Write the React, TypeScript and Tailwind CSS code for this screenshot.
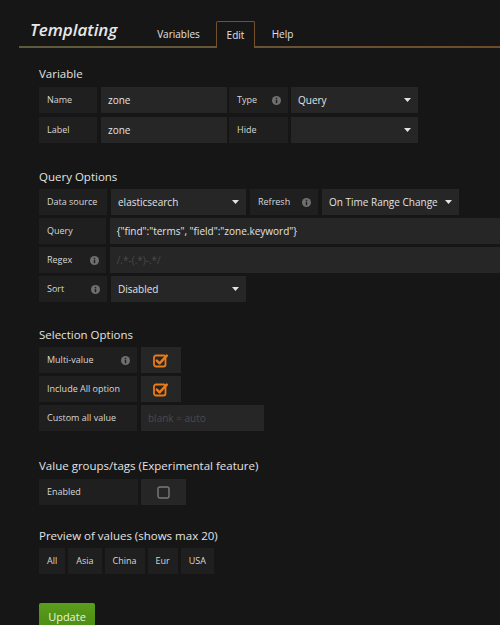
import React from 'react';

const Info = () => (
  <svg width="9" height="9" viewBox="0 0 10 10" className="shrink-0">
    <circle cx="5" cy="5" r="5" fill="#6f6f6f" />
    <rect x="4.2" y="4.2" width="1.6" height="3.8" fill="#1f1f1f" />
    <rect x="4.2" y="2" width="1.6" height="1.5" fill="#1f1f1f" />
  </svg>
);

const Caret = () => (
  <svg width="7" height="4" viewBox="0 0 7 4" className="shrink-0">
    <path d="M0 0 L7 0 L3.5 4 Z" fill="#e3e3e3" />
  </svg>
);

const Checked = () => (
  <svg width="16" height="15" viewBox="0 0 16 15">
    <rect x="1" y="2.5" width="11.5" height="11" rx="2" fill="none" stroke="#eb7b18" strokeWidth="1.8" />
    <path d="M3.8 7.6 L6.6 10.4 L13.8 2.6" fill="none" stroke="#eb7b18" strokeWidth="2.4" strokeLinecap="round" strokeLinejoin="round" />
  </svg>
);

const Unchecked = () => (
  <svg width="13" height="13" viewBox="0 0 13 13">
    <rect x="1" y="1" width="11" height="11" rx="2" fill="none" stroke="#7a7a7a" strokeWidth="1.4" />
  </svg>
);

const Label: React.FC<{ w: string; info?: boolean; children: React.ReactNode }> = ({ w, info, children }) => (
  <div className={`${w} h-[26px] bg-[#1f1f1f] flex items-center justify-between pl-2 pr-[7px] text-[9px] text-[#d8d8d8]`}>
    <span>{children}</span>
    {info && <Info />}
  </div>
);

const Field: React.FC<{ w: string; caret?: boolean; placeholder?: boolean; children?: React.ReactNode }> = ({
  w,
  caret,
  placeholder,
  children,
}) => (
  <div
    className={`${w} h-[26px] bg-[#262626] flex items-center justify-between pl-[7px] pr-[7px] text-[10px] whitespace-nowrap ${
      placeholder ? 'text-[#4a4a4a]' : 'text-[#e3e3e3]'
    }`}
  >
    <span>{children}</span>
    {caret && <Caret />}
  </div>
);

const Heading: React.FC<{ className?: string; children: React.ReactNode }> = ({ className, children }) => (
  <div className={`h-[20px] leading-[20px] text-[11.5px] text-[#e3e3e3] ${className ?? ''}`}>{children}</div>
);

const Tag: React.FC<{ children: React.ReactNode }> = ({ children }) => (
  <div className="h-[26px] bg-[#1f1f1f] px-2 flex items-center text-[9px] text-[#d8d8d8]">{children}</div>
);

export default function App() {
  return (
    <div
      className="w-[500px] h-[625px] overflow-hidden bg-[#161616] text-[#d8d8d8]"
      style={{ fontFamily: '"Open Sans", "Liberation Sans", sans-serif' }}
    >
      {/* Header */}
      <div className="pt-[21px] pl-[19px]">
        <div className="relative flex items-end h-[27px]">
          <div className="absolute left-0 right-0 bottom-0 h-[2px] bg-gradient-to-r from-[#5c5b3e] to-[#6e4b2a]" />
          <div className="w-[122px] pl-[11px] self-start -mt-[3px] text-[17px] italic font-semibold text-[#e8e8e8] leading-[24px]">
            Templating
          </div>
          <div className="w-[75px] text-[10px] text-[#e3e3e3] h-[27px] flex items-center justify-center">Variables</div>
          <div className="relative z-10 w-[39px] h-[27px] border border-b-0 border-[#74502c] rounded-t-[2px] bg-[#161616] text-[10px] text-[#e3e3e3] flex items-center justify-center">
            Edit
          </div>
          <div className="w-[55px] text-[10px] text-[#e3e3e3] h-[27px] flex items-center justify-center">Help</div>
        </div>
      </div>

      <div className="pl-[39px]">
        {/* Variable */}
        <Heading className="mt-[16px] mb-[3px]">Variable</Heading>
        <div className="flex flex-col gap-[4px]">
          <div className="flex">
            <Label w="w-[58px]">Name</Label>
            <div className="ml-[4px]">
              <Field w="w-[126px]">zone</Field>
            </div>
            <div className="ml-[2px]">
              <Label w="w-[59px]" info>
                Type
              </Label>
            </div>
            <div className="ml-[3px]">
              <Field w="w-[127px]" caret>
                Query
              </Field>
            </div>
          </div>
          <div className="flex">
            <Label w="w-[58px]">Label</Label>
            <div className="ml-[4px]">
              <Field w="w-[126px]">zone</Field>
            </div>
            <div className="ml-[2px]">
              <Label w="w-[59px]">Hide</Label>
            </div>
            <div className="ml-[3px]">
              <Field w="w-[127px]" caret />
            </div>
          </div>
        </div>

        {/* Query Options */}
        <Heading className="mt-[24px] mb-[2px]">Query Options</Heading>
        <div className="flex flex-col gap-[3px]">
          <div className="flex gap-[4px]">
            <Label w="w-[68px]">Data source</Label>
            <Field w="w-[135px]" caret>
              elasticsearch
            </Field>
            <Label w="w-[68px]" info>
              Refresh
            </Label>
            <Field w="w-[137px]" caret>
              On Time Range Change
            </Field>
          </div>
          <div className="flex gap-[4px]">
            <Label w="w-[68px]">Query</Label>
            <Field w="w-[400px]">{'{"find":"terms", "field":"zone.keyword"}'}</Field>
          </div>
          <div className="flex gap-[4px]">
            <Label w="w-[68px]" info>
              Regex
            </Label>
            <Field w="w-[400px]" placeholder>
              /.*-(.*)-.*/
            </Field>
          </div>
          <div className="flex gap-[4px]">
            <Label w="w-[68px]" info>
              Sort
            </Label>
            <Field w="w-[135px]" caret>
              Disabled
            </Field>
          </div>
        </div>

        {/* Selection Options */}
        <Heading className="mt-[23px] mb-[2px]">Selection Options</Heading>
        <div className="flex flex-col gap-[3px]">
          <div className="flex gap-[4px]">
            <Label w="w-[98px]" info>
              Multi-value
            </Label>
            <div className="w-[40px] h-[26px] bg-[#262626] flex items-center justify-center">
              <Checked />
            </div>
          </div>
          <div className="flex gap-[4px]">
            <Label w="w-[98px]">Include All option</Label>
            <div className="w-[40px] h-[26px] bg-[#262626] flex items-center justify-center">
              <Checked />
            </div>
          </div>
          <div className="flex gap-[4px]">
            <Label w="w-[98px]">Custom all value</Label>
            <Field w="w-[123px]" placeholder>
              blank = auto
            </Field>
          </div>
        </div>

        {/* Value groups */}
        <Heading className="mt-[25px] mb-[3px]">Value groups/tags (Experimental feature)</Heading>
        <div className="flex gap-[3px]">
          <Label w="w-[99px]">Enabled</Label>
          <div className="w-[45px] h-[26px] bg-[#262626] flex items-center justify-center">
            <Unchecked />
          </div>
        </div>

        {/* Preview */}
        <Heading className="mt-[21px] mb-[2px]">Preview of values (shows max 20)</Heading>
        <div className="flex gap-[3px]">
          <Tag>All</Tag>
          <Tag>Asia</Tag>
          <Tag>China</Tag>
          <Tag>Eur</Tag>
          <Tag>USA</Tag>
        </div>

        <button className="mt-[29px] w-[56px] h-[28px] rounded-t-[2px] bg-gradient-to-b from-[#5b9d1c] to-[#4a8a12] text-[11px] text-[#eaf5dc] flex items-center justify-center">
          Update
        </button>
      </div>
    </div>
  );
}
